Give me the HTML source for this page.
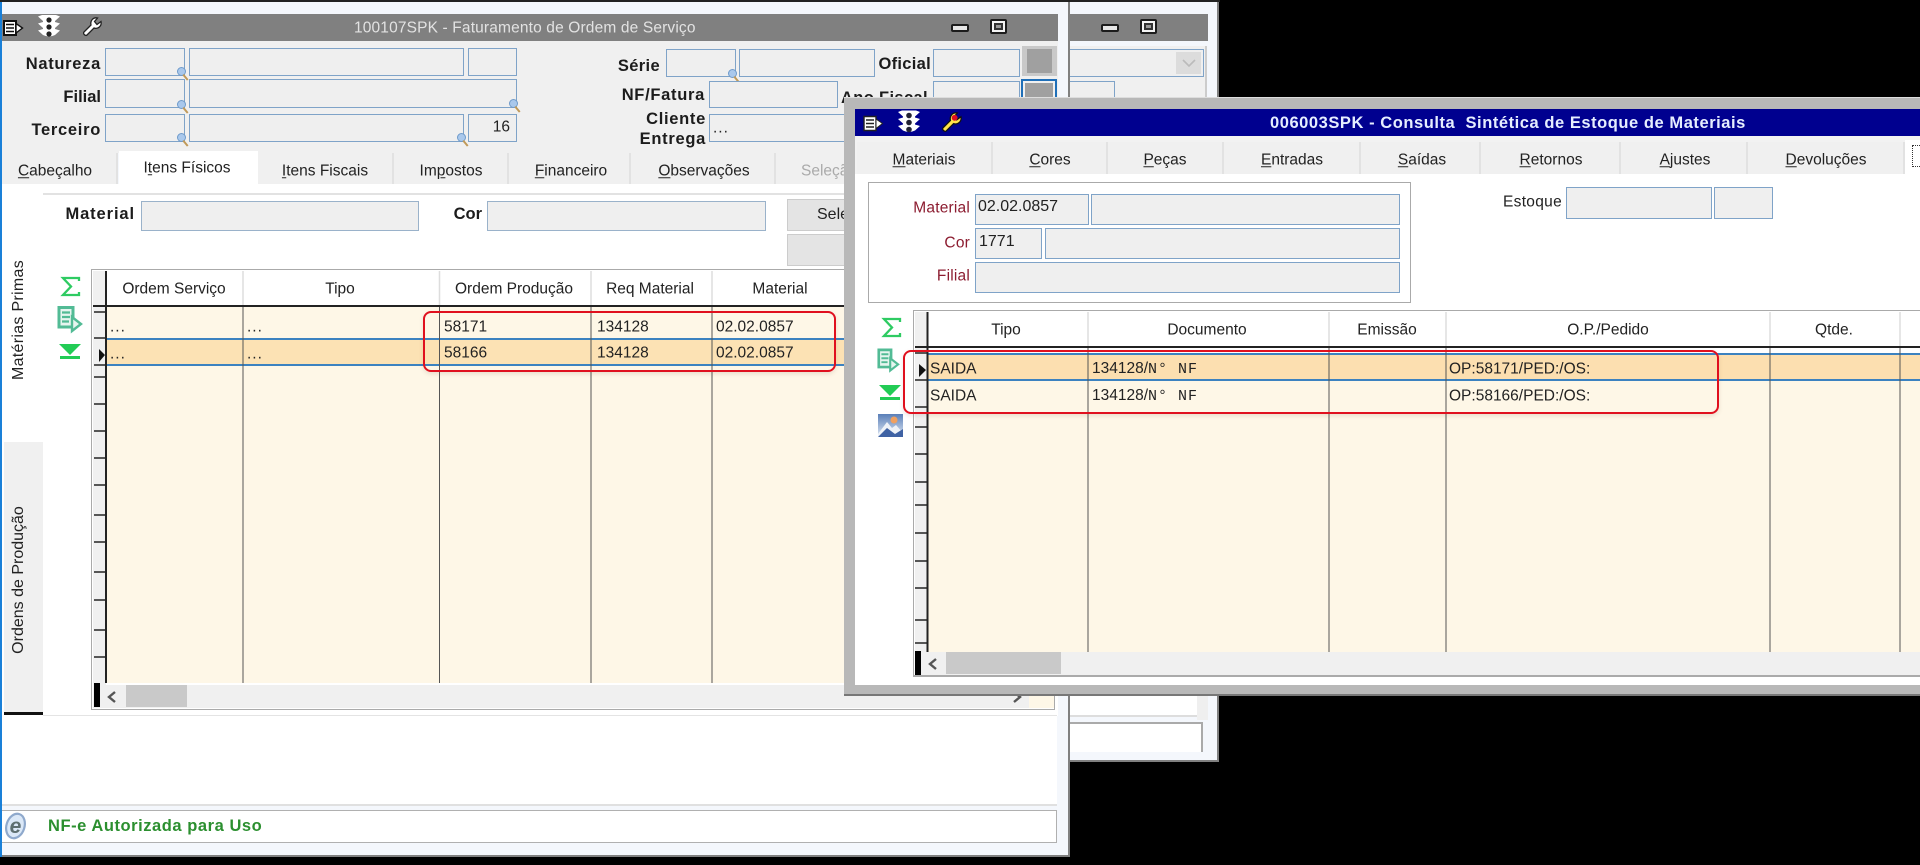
<!DOCTYPE html>
<html lang="pt">
<head>
<meta charset="utf-8">
<title>Faturamento de Ordem de Serviço</title>
<style>
html,body{margin:0;padding:0;background:#000;width:1920px;height:865px;overflow:hidden}
#root{position:absolute;left:0;top:0;width:1920px;height:865px;background:#000;overflow:hidden;font-family:"Liberation Sans",sans-serif;font-size:15.5px;color:#222;filter:blur(.3px)}
.w{position:absolute;left:0;top:0;width:1920px;height:865px}
.a{position:absolute;box-sizing:border-box}
.f{position:absolute;box-sizing:border-box;background:#efefef;border:1.5px solid #7fa3c8}
.t,.c,.r{position:absolute;white-space:nowrap;line-height:1}
.t{transform:translateY(-50%)}
.c{transform:translate(-50%,-50%)}
.r{transform:translate(-100%,-50%)}
.b{font-weight:bold;font-size:16.5px;letter-spacing:.7px;color:#1c1c1c}
.m{color:#8c1c30;letter-spacing:.2px}
.d{letter-spacing:1px}
.ttl{background:#808080}
.tab{position:absolute;box-sizing:border-box;background:#f0f0f0;border-right:2px solid #e2e2e2}
u{text-underline-offset:2px}
.lens{position:absolute;width:9px;height:9px;border-radius:50%;background:#a9c8ec;border:1px solid #6f9bcb;box-sizing:border-box}
.lens:after{content:"";position:absolute;left:6px;top:6px;width:7px;height:2px;background:#c09a5a;transform:rotate(50deg);transform-origin:0 0}
svg{position:absolute;overflow:visible}
.min{position:absolute;width:18px;height:8px;box-sizing:border-box;background:#e6e6e6;border:2px solid #1c1c1c;border-radius:2px}
.max{position:absolute;width:17px;height:15px;box-sizing:border-box;background:#f4f4f4;border:2px solid #1c1c1c;border-radius:2px}
.max:after{content:"";position:absolute;left:2px;top:2px;width:9px;height:7px;box-sizing:border-box;border:2px solid #333;background:#999}
</style>
</head>
<body>
<div id="root">

<!-- BACK WINDOW -->
<div class="w">
  <div class="a" style="left:1060px;top:2px;width:159px;height:760px;background:#f4f7fc;border-right:2px solid #808080;border-bottom:2px solid #808080"></div>
  <div class="a" style="left:1060px;top:0;width:160px;height:2px;background:#222"></div>
  <div class="a ttl" style="left:1060px;top:14px;width:148px;height:27px"></div>
  <div class="min" style="left:1101px;top:24px"></div>
  <div class="max" style="left:1140px;top:19px"></div>
  <div class="a" style="left:1060px;top:46px;width:147px;height:650px;background:#f0f0f0;border-right:2px solid #ccc"></div>
  <div class="f" style="left:1060px;top:49px;width:144px;height:28px"></div>
  <div class="a" style="left:1176px;top:52px;width:25px;height:22px;background:#dcdcdc"></div>
  <svg style="left:1182px;top:59px" width="14" height="8" viewBox="0 0 14 8"><path d="M1 1 L7 7 L13 1" fill="none" stroke="#bbb" stroke-width="1.6"/></svg>
  <div class="f" style="left:1060px;top:81px;width:55px;height:30px"></div>
  <div class="a" style="left:1070px;top:696px;width:127px;height:21px;background:#fff;border-bottom:2px solid #ddd"></div>
  <div class="a" style="left:1197px;top:696px;width:20px;height:64px;background:#f4f7fc"></div>
  <div class="a" style="left:1197px;top:696px;width:11px;height:24px;background:#efefef"></div>
  <div class="a" style="left:1070px;top:722px;width:133px;height:30px;background:#fff;border-top:2px solid #aaa;border-right:2px solid #aaa"></div>
  <div class="a" style="left:1070px;top:752px;width:147px;height:8px;background:#f4f7fc"></div>
</div>

<!-- MAIN WINDOW -->
<div class="w">
  <div class="a" style="left:0;top:0;width:1070px;height:2px;background:#222"></div>
  <div class="a" style="left:0;top:2px;width:1070px;height:855px;background:#f4f7fc;border-right:2px solid #808080;border-bottom:2px solid #808080"></div>
  <div class="a" style="left:0;top:2px;width:2px;height:855px;background:#1a80d8"></div>
  <div class="a ttl" style="left:2px;top:14px;width:1056px;height:27px"></div>
  <div class="t" style="left:354px;top:28px;color:#e2e2e2;font-size:15.5px;letter-spacing:.15px">100107SPK - Faturamento de Ordem de Serviço</div>

  <svg style="left:3px;top:20px" width="20" height="16" viewBox="0 0 20 16"><path d="M1 1H13V15H1Z" fill="#fff" stroke="#111" stroke-width="2"/><path d="M3 4.5H11M3 8H11M3 11.5H11" stroke="#111" stroke-width="1.6"/><path d="M13 3.5L19.5 8L13 13Z" fill="#fff" stroke="#111" stroke-width="1.4"/></svg>
  <svg style="left:38px;top:15px" width="22" height="22" viewBox="0 0 22 22"><path d="M4 0H18L22 1.5L17 6V7L22 8.5L17 13V14L22 15.5L17 20Q11 23 5 20L0 15.5L5 14V13L0 8.5L5 7V6L0 1.5Z" fill="#fff"/><circle cx="11" cy="5" r="2.6" fill="#222"/><circle cx="11" cy="12" r="2.6" fill="#222"/><circle cx="11" cy="19" r="2.6" fill="#222"/></svg>
  <svg style="left:82px;top:17px" width="20" height="20" viewBox="0 0 20 20"><path d="M2 15L9 8C8 4 11 0 15.5 1L12.5 4.5L15 7.5L19 4.5C20 9 16 12.5 12 11L5 18C3.5 19.5 .5 16.5 2 15Z" fill="#fff" stroke="#222" stroke-width="1.3"/></svg>
  <div class="min" style="left:951px;top:24px"></div>
  <div class="max" style="left:990px;top:19px"></div>

  <div class="a" style="left:2px;top:41px;width:1056px;height:112px;background:#f0f0f0"></div>

  <div class="r b" style="left:101px;top:64px">Natureza</div>
  <div class="f" style="left:105px;top:48px;width:80px;height:28px"></div>
  <div class="f" style="left:189px;top:48px;width:275px;height:28px"></div>
  <div class="f" style="left:468px;top:48px;width:49px;height:28px"></div>
  <div class="r b" style="left:101px;top:97px;letter-spacing:0">Filial</div>
  <div class="f" style="left:105px;top:79px;width:80px;height:29px"></div>
  <div class="f" style="left:189px;top:79px;width:328px;height:29px"></div>
  <div class="r b" style="left:101px;top:130px">Terceiro</div>
  <div class="f" style="left:105px;top:114px;width:80px;height:28px"></div>
  <div class="f" style="left:189px;top:114px;width:275px;height:28px"></div>
  <div class="f" style="left:468px;top:114px;width:49px;height:28px"></div>
  <div class="r" style="left:510px;top:127px">16</div>
  <div class="lens" style="left:177px;top:67px"></div>
  <div class="lens" style="left:177px;top:100px"></div>
  <div class="lens" style="left:177px;top:133px"></div>
  <div class="lens" style="left:509px;top:99px"></div>
  <div class="lens" style="left:457px;top:133px"></div>

  <div class="r b" style="left:660px;top:66px;letter-spacing:.35px">Série</div>
  <div class="f" style="left:666px;top:49px;width:70px;height:28px"></div>
  <div class="f" style="left:739px;top:49px;width:136px;height:28px"></div>
  <div class="lens" style="left:728px;top:69px"></div>
  <div class="r b" style="left:931px;top:64px;letter-spacing:.3px">Oficial</div>
  <div class="f" style="left:933px;top:49px;width:87px;height:28px"></div>
  <div class="a" style="left:1022px;top:46px;width:35px;height:30px;background:#c9c9c9"></div>
  <div class="a" style="left:1027px;top:49px;width:25px;height:24px;background:#a0a0a0"></div>

  <div class="r b" style="left:705px;top:95px">NF/Fatura</div>
  <div class="f" style="left:709px;top:81px;width:129px;height:27px"></div>
  <div class="t b" style="left:841px;top:98px;letter-spacing:.35px">Ano Fiscal</div>
  <div class="f" style="left:933px;top:81px;width:87px;height:30px"></div>
  <div class="a" style="left:1021px;top:79px;width:36px;height:30px;background:#a0a0a0;border:2px solid #1f6fb8;box-shadow:inset 0 0 0 2px #f0f0f0"></div>

  <div class="r b" style="left:706px;top:119px">Cliente</div>
  <div class="r b" style="left:706px;top:139px">Entrega</div>
  <div class="f" style="left:709px;top:114px;width:150px;height:28px"></div>
  <div class="t d" style="left:713px;top:128px">...</div>

  <!-- tabs -->
  <div class="tab" style="left:2px;top:153px;width:116px;height:31px"></div>
  <div class="tab" style="left:258px;top:153px;width:136px;height:31px"></div>
  <div class="tab" style="left:394px;top:153px;width:115px;height:31px"></div>
  <div class="tab" style="left:509px;top:153px;width:122px;height:31px"></div>
  <div class="tab" style="left:631px;top:153px;width:145px;height:31px"></div>
  <div class="tab" style="left:776px;top:153px;width:100px;height:31px"></div>
  <div class="a" style="left:119px;top:151px;width:139px;height:34px;background:#fff"></div>
  <div class="a" style="left:2px;top:184px;width:1056px;height:532px;background:#fff"></div>
  <div class="a" style="left:119px;top:151px;width:139px;height:40px;background:#fff"></div>
  <div class="a" style="left:43px;top:193px;width:1015px;height:2px;background:#e2e2e2"></div>
  <div class="c" style="left:55px;top:171px"><u>C</u>abeçalho</div>
  <div class="c" style="left:187px;top:168px">I<u>t</u>ens Físicos</div>
  <div class="c" style="left:325px;top:171px"><u>I</u>tens Fiscais</div>
  <div class="c" style="left:451px;top:171px">Im<u>p</u>ostos</div>
  <div class="c" style="left:571px;top:171px"><u>F</u>inanceiro</div>
  <div class="c" style="left:704px;top:171px"><u>O</u>bservações</div>
  <div class="t" style="left:801px;top:171px;color:#aaa">Seleção</div>

  <div class="r b" style="left:135px;top:214px;letter-spacing:.9px">Material</div>
  <div class="f" style="left:141px;top:201px;width:278px;height:30px;border-color:#9ab2ca"></div>
  <div class="r b" style="left:482px;top:214px;letter-spacing:0">Cor</div>
  <div class="f" style="left:487px;top:201px;width:279px;height:30px;border-color:#9ab2ca"></div>
  <div class="a" style="left:787px;top:199px;width:70px;height:32px;background:#e4e4e4;border:1px solid #ccc"></div>
  <div class="t" style="left:817px;top:215px;font-size:16px">Sele</div>
  <div class="a" style="left:787px;top:234px;width:70px;height:32px;background:#e4e4e4;border:1px solid #ccc"></div>

  <!-- vertical tabs -->
  <div class="a" style="left:4px;top:442px;width:39px;height:273px;background:#f0f0f0;border-bottom:3px solid #111"></div>
  <div class="c" style="left:19px;top:320px;transform:translate(-50%,-50%) rotate(-90deg);font-size:16px;letter-spacing:.3px">Matérias Primas</div>
  <div class="c" style="left:19px;top:580px;transform:translate(-50%,-50%) rotate(-90deg);font-size:16px;letter-spacing:0">Ordens de Produção</div>
  <div class="a" style="left:43px;top:715px;width:1014px;height:2px;background:#e4e4e4"></div>

  <!-- side icons -->
  <svg style="left:61px;top:277px" width="19" height="19" viewBox="0 0 19 19"><path d="M18 4V1H2L10 9.5L2 18H18V15" fill="none" stroke="#2ecb62" stroke-width="2.3"/></svg>
  <svg style="left:57px;top:306px" width="25" height="26" viewBox="0 0 25 26"><path d="M2 1.5H16V21H2Z" fill="#e6f5ef" stroke="#52bb95" stroke-width="3"/><path d="M5 6.5H13M5 11H13M5 15.5H12" stroke="#52bb95" stroke-width="2.2"/><path d="M15 11L24 18L15 25Z" fill="#e6f5ef" stroke="#52bb95" stroke-width="2.4"/></svg>
  <svg style="left:59px;top:344px" width="22" height="15" viewBox="0 0 22 15"><path d="M0 0H22L11 11Z" fill="#22cc55"/><path d="M1 13.5H21" stroke="#22cc55" stroke-width="3"/></svg>

  <!-- grid -->
  <div class="a" style="left:91px;top:269px;width:964px;height:441px;background:#fff;border:1.5px solid #aaa"></div>
  <div class="a" style="left:93px;top:271px;width:13px;height:414px;background:#f0f0f0"></div>
  <div class="a" style="left:107px;top:307px;width:780px;height:376px;background:#fef7e7"></div>
  <div class="a" style="left:107px;top:338px;width:780px;height:28px;background:#fce2b4;border-top:2px solid #3c82c0;border-bottom:2px solid #3c82c0"></div>
  <svg style="left:0;top:0" width="1060" height="720" viewBox="0 0 1060 720">
    <path d="M243 271V306M439.5 271V306M591 271V306M712 271V306" stroke="#ddd" stroke-width="1.5"/>
    <path d="M243 307V683M439.5 307V683M591 307V683M712 307V683" stroke="#555" stroke-width="1"/>
    <path d="M93 306H860" stroke="#222" stroke-width="2"/>
    <path d="M106 271V683" stroke="#222" stroke-width="2"/>
    <path d="M94 312H106M94 338H106M94 365H106M94 377H106M94 404H106M94 431H106M94 458H106M94 485H106M94 515H106M94 542H106M94 572H106M94 600H106M94 630H106M94 657H106" stroke="#222" stroke-width="1.6"/>
    <path d="M99 349L105 355L99 362Z" fill="#111"/>
  </svg>
  <div class="c" style="left:174px;top:289px">Ordem Serviço</div>
  <div class="c" style="left:340px;top:289px">Tipo</div>
  <div class="c" style="left:514px;top:289px">Ordem Produção</div>
  <div class="c" style="left:650px;top:289px">Req Material</div>
  <div class="c" style="left:780px;top:289px">Material</div>
  <div class="t d" style="left:110px;top:327px">...</div>
  <div class="t d" style="left:247px;top:327px">...</div>
  <div class="t d" style="left:110px;top:354px">...</div>
  <div class="t d" style="left:247px;top:354px">...</div>
  <div class="t" style="left:444px;top:327px">58171</div>
  <div class="t" style="left:444px;top:353px">58166</div>
  <div class="t" style="left:597px;top:327px">134128</div>
  <div class="t" style="left:597px;top:353px">134128</div>
  <div class="t" style="left:716px;top:327px">02.02.0857</div>
  <div class="t" style="left:716px;top:353px">02.02.0857</div>

  <!-- scrollbar -->
  <div class="a" style="left:93px;top:685px;width:936px;height:23px;background:#f0f0f0"></div>
  <div class="a" style="left:1029px;top:696px;width:25px;height:12px;background:#fef7e7"></div>
  <div class="a" style="left:94px;top:683px;width:6px;height:24px;background:#000"></div>
  <svg style="left:107px;top:691px" width="10" height="12" viewBox="0 0 10 12"><path d="M8 1L2 6L8 11" fill="none" stroke="#555" stroke-width="2.4"/></svg>
  <div class="a" style="left:126px;top:685px;width:61px;height:22px;background:#c9c9c9"></div>
  <svg style="left:1012px;top:691px" width="10" height="12" viewBox="0 0 10 12"><path d="M2 1L8 6L2 11" fill="none" stroke="#555" stroke-width="2.4"/></svg>

  <div class="a" style="left:423px;top:311px;width:413px;height:61px;border:2px solid #e0101e;border-radius:8px;box-shadow:0 2px 4px rgba(120,80,60,.15)"></div>

  <!-- status -->
  <div class="a" style="left:2px;top:716px;width:1055px;height:90px;background:#fff;border-bottom:2px solid #e0e0e0"></div>
  <div class="a" style="left:2px;top:810px;width:1055px;height:33px;background:#fff;border-top:1.5px solid #b0b0b0;border-bottom:1.5px solid #b0b0b0;border-right:1.5px solid #b0b0b0"></div>
  <svg style="left:2px;top:813px" width="27" height="26" viewBox="0 0 27 26"><ellipse cx="13.5" cy="13" rx="9" ry="12.5" transform="rotate(18 13.5 13)" fill="#dbe8f7" stroke="#8fa9cc" stroke-width="2.2"/><text x="13.5" y="20" text-anchor="middle" font-family="Liberation Sans" font-style="italic" font-weight="bold" font-size="21" fill="#5e6f70">e</text></svg>
  <div class="t" style="left:48px;top:826px;font-weight:bold;font-size:16.5px;letter-spacing:.55px;color:#2b8f2f">NF-e Autorizada para Uso</div>
</div>

<!-- FRONT WINDOW -->
<div class="w">
  <div class="a" style="left:844px;top:97px;width:1076px;height:599px;background:#b8b8b8;border-bottom:2px solid #777;border-top:1px solid #ddd"></div>
  <div class="a" style="left:855px;top:109px;width:1065px;height:27px;background:#00008f"></div>
  <div class="a" style="left:855px;top:136px;width:1065px;height:549px;background:#fff"></div>
  <div class="t" style="left:1270px;top:123px;font-weight:bold;font-size:16.5px;letter-spacing:.55px;color:#e6eeff;white-space:pre">006003SPK - Consulta  Sintética de Estoque de Materiais</div>

  <svg style="left:863px;top:115px" width="20" height="17" viewBox="0 0 20 16"><path d="M1 1H13V15H1Z" fill="#fff" stroke="#222" stroke-width="1.4"/><path d="M3 4.5H11M3 8H11M3 11.5H11" stroke="#222" stroke-width="1.5"/><path d="M13 3.5L19.5 8L13 13Z" fill="#fff" stroke="#222" stroke-width="1"/></svg>
  <svg style="left:898px;top:110px" width="22" height="23" viewBox="0 0 22 22"><path d="M4 0H18L22 1.5L17 6V7L22 8.5L17 13V14L22 15.5L17 20Q11 23 5 20L0 15.5L5 14V13L0 8.5L5 7V6L0 1.5Z" fill="#fff"/><circle cx="11" cy="5" r="2.8" fill="#223"/><circle cx="11" cy="12" r="2.8" fill="#223"/><circle cx="11" cy="19" r="2.8" fill="#223"/></svg>
  <svg style="left:941px;top:112px" width="21" height="21" viewBox="0 0 20 20"><path d="M2 15L9 8C8 4 11 0 15.5 1L12.5 4.5L15 7.5L19 4.5C20 9 16 12.5 12 11L5 18C3.5 19.5 .5 16.5 2 15Z" fill="#ffe24a" stroke="#111" stroke-width="1.2"/><circle cx="13" cy="5.5" r="2.8" fill="#e01020"/></svg>

  <!-- tabs -->
  <div class="a" style="left:855px;top:136px;width:1065px;height:38px;background:#f2f2f2"></div>
  <div class="tab" style="left:857px;top:142px;width:136px;height:32px"></div>
  <div class="tab" style="left:993px;top:142px;width:115px;height:32px"></div>
  <div class="tab" style="left:1108px;top:142px;width:116px;height:32px"></div>
  <div class="tab" style="left:1224px;top:142px;width:137px;height:32px"></div>
  <div class="tab" style="left:1361px;top:142px;width:120px;height:32px"></div>
  <div class="tab" style="left:1481px;top:142px;width:140px;height:32px"></div>
  <div class="tab" style="left:1621px;top:142px;width:127px;height:32px"></div>
  <div class="tab" style="left:1748px;top:142px;width:157px;height:32px"></div>
  <div class="a" style="left:1905px;top:140px;width:15px;height:36px;background:#fff"></div>
  <div class="a" style="left:1912px;top:145px;width:12px;height:22px;border:1px dotted #333"></div>
  <div class="c" style="left:924px;top:160px"><u>M</u>ateriais</div>
  <div class="c" style="left:1050px;top:160px"><u>C</u>ores</div>
  <div class="c" style="left:1165px;top:160px"><u>P</u>eças</div>
  <div class="c" style="left:1292px;top:160px"><u>E</u>ntradas</div>
  <div class="c" style="left:1422px;top:160px"><u>S</u>aídas</div>
  <div class="c" style="left:1551px;top:160px"><u>R</u>etornos</div>
  <div class="c" style="left:1685px;top:160px"><u>A</u>justes</div>
  <div class="c" style="left:1826px;top:160px"><u>D</u>evoluções</div>

  <!-- group -->
  <div class="a" style="left:868px;top:182px;width:543px;height:121px;border:1.5px solid #aaa;background:#fff"></div>
  <div class="r m" style="left:970px;top:208px">Material</div>
  <div class="f" style="left:975px;top:194px;width:114px;height:31px"></div>
  <div class="t" style="left:978px;top:207px;font-size:16px">02.02.0857</div>
  <div class="f" style="left:1091px;top:194px;width:309px;height:31px"></div>
  <div class="r m" style="left:970px;top:243px">Cor</div>
  <div class="f" style="left:975px;top:228px;width:67px;height:31px"></div>
  <div class="t" style="left:979px;top:242px;font-size:16px">1771</div>
  <div class="f" style="left:1045px;top:228px;width:355px;height:31px"></div>
  <div class="r m" style="left:970px;top:276px">Filial</div>
  <div class="f" style="left:975px;top:262px;width:425px;height:31px"></div>
  <div class="r" style="left:1562px;top:202px;letter-spacing:.3px">Estoque</div>
  <div class="f" style="left:1566px;top:187px;width:146px;height:32px"></div>
  <div class="f" style="left:1714px;top:187px;width:59px;height:32px"></div>

  <!-- side icons -->
  <svg style="left:882px;top:318px" width="19" height="19" viewBox="0 0 19 19"><path d="M18 4V1H2L10 9.5L2 18H18V15" fill="none" stroke="#2ecb62" stroke-width="2.3"/></svg>
  <svg style="left:877px;top:347px" width="22" height="26" viewBox="0 0 25 26"><path d="M2 1.5H16V21H2Z" fill="#e6f5ef" stroke="#52bb95" stroke-width="3"/><path d="M5 6.5H13M5 11H13M5 15.5H12" stroke="#52bb95" stroke-width="2.2"/><path d="M15 11L24 18L15 25Z" fill="#e6f5ef" stroke="#52bb95" stroke-width="2.4"/></svg>
  <svg style="left:879px;top:385px" width="22" height="15" viewBox="0 0 22 15"><path d="M0 0H22L11 11Z" fill="#22cc55"/><path d="M1 13.5H21" stroke="#22cc55" stroke-width="3"/></svg>
  <svg style="left:878px;top:414px" width="25" height="23" viewBox="0 0 25 23"><defs><linearGradient id="sky" x1="0" y1="0" x2="0" y2="1"><stop offset="0" stop-color="#5a7fb8"/><stop offset="1" stop-color="#dfe8f4"/></linearGradient></defs><rect width="25" height="23" fill="url(#sky)"/><circle cx="16" cy="6" r="3.5" fill="#f0a060"/><path d="M0 20L9 8L14 14L18 11L25 19V23H0Z" fill="#eef2f8"/><path d="M0 23L9 14L17 20L25 15V23Z" fill="#3f62a4"/></svg>

  <!-- grid -->
  <div class="a" style="left:913px;top:310px;width:1007px;height:367px;background:#fff;border-top:1.5px solid #aaa;border-left:1.5px solid #aaa;border-bottom:2px solid #aaa"></div>
  <div class="a" style="left:915px;top:312px;width:12px;height:340px;background:#f0f0f0"></div>
  <div class="a" style="left:928px;top:353px;width:992px;height:299px;background:#fef7e7"></div>
  <div class="a" style="left:928px;top:353px;width:992px;height:28px;background:#fcdfb0;border-top:2px solid #3c82c0;border-bottom:2px solid #3c82c0"></div>
  <svg style="left:0;top:0" width="1920" height="700" viewBox="0 0 1920 700">
    <path d="M1088 312V346M1329 312V346M1446 312V346M1770 312V346M1900 312V346" stroke="#ddd" stroke-width="1.5"/>
    <path d="M1088 347V652M1329 347V652M1446 347V652M1770 347V652M1900 347V652" stroke="#555" stroke-width="1"/>
    <path d="M915 347H1920" stroke="#222" stroke-width="2"/>
    <path d="M927.5 312V652" stroke="#222" stroke-width="2"/>
    <path d="M915 353H927M915 380H927M915 407H927M915 427H927M915 454H927M915 482H927M915 505H927M915 533H927M915 561H927M915 588H927M915 620H927M915 643H927" stroke="#222" stroke-width="1.6"/>
    <path d="M919 364L926 370L919 377Z" fill="#111"/>
  </svg>
  <div class="c" style="left:1006px;top:330px">Tipo</div>
  <div class="c" style="left:1207px;top:330px">Documento</div>
  <div class="c" style="left:1387px;top:330px">Emissão</div>
  <div class="c" style="left:1608px;top:330px">O.P./Pedido</div>
  <div class="c" style="left:1834px;top:330px">Qtde.</div>

  <div class="t" style="left:930px;top:368.5px">SAIDA</div>
  <div class="t" style="left:930px;top:395.5px">SAIDA</div>
  <div class="t" style="left:1092px;top:368.5px">134128/<span style="font-family:'Liberation Mono',monospace;font-size:15px;letter-spacing:1px">N° NF</span></div>
  <div class="t" style="left:1092px;top:395.5px">134128/<span style="font-family:'Liberation Mono',monospace;font-size:15px;letter-spacing:1px">N° NF</span></div>
  <div class="t" style="left:1449px;top:368.5px">OP:58171/PED:/OS:</div>
  <div class="t" style="left:1449px;top:395.5px">OP:58166/PED:/OS:</div>

  <!-- scrollbar -->
  <div class="a" style="left:915px;top:652px;width:1005px;height:23px;background:#f0f0f0"></div>
  <div class="a" style="left:915px;top:651px;width:6px;height:24px;background:#000"></div>
  <svg style="left:928px;top:658px" width="10" height="12" viewBox="0 0 10 12"><path d="M8 1L2 6L8 11" fill="none" stroke="#555" stroke-width="2.4"/></svg>
  <div class="a" style="left:946px;top:652px;width:115px;height:22px;background:#c9c9c9"></div>

  <div class="a" style="left:903px;top:350px;width:816px;height:64px;border:2px solid #e0101e;border-radius:8px;box-shadow:0 2px 4px rgba(120,80,60,.15)"></div>
</div>

</div>
</body>
</html>
